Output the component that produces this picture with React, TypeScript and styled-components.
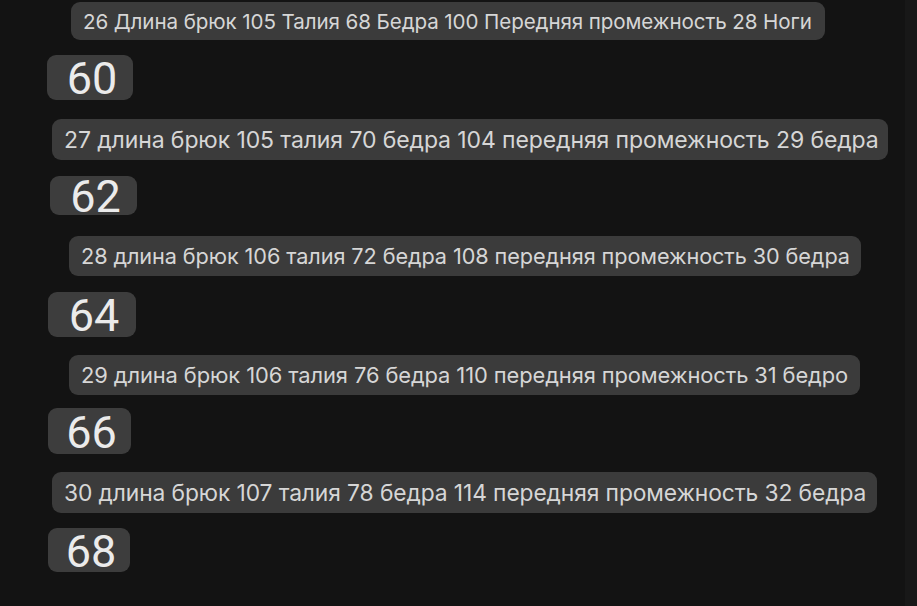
import React, { FC } from "react";
import styled, { createGlobalStyle } from "styled-components";

interface OffsetProps {
	$left: number;
	$top: number;
	$width: number;
	$height: number;
	$font?: number;
}

interface Entry {
	text: string;
	textLeft: number;
	textTop: number;
	textWidth: number;
	textHeight: number;
	textFont: number;
	size: string;
	sizeLeft: number;
	sizeTop: number;
	sizeWidth: number;
	sizeHeight: number;
}

const GlobalStyle = createGlobalStyle`
	html, body {
		margin: 0;
		padding: 0;
		background: #131313;
	}
	body {
		width: 917px;
		height: 606px;
		overflow: hidden;
		font-family: Inter, "Noto Sans", sans-serif;
	}
`;

const Page = styled.div`
	display: flex;
	flex-direction: column;
	align-items: flex-start;
	width: 917px;
	height: 606px;
	background: #131313;
	box-shadow: inset -12px 0 0 #181818;
`;

const Caption = styled.div<OffsetProps>`
	box-sizing: border-box;
	display: flex;
	align-items: center;
	margin: ${(p) => p.$top}px 0 0 ${(p) => p.$left}px;
	width: ${(p) => p.$width}px;
	height: ${(p) => p.$height}px;
	padding: 0 12px;
	background: #3b3b3b;
	border-radius: 9px;
	color: #d6d6d6;
	font-size: ${(p) => p.$font}px;
	letter-spacing: -0.1px;
	white-space: nowrap;
`;

const Size = styled.div<OffsetProps>`
	box-sizing: border-box;
	display: flex;
	align-items: center;
	justify-content: center;
	margin: ${(p) => p.$top}px 0 0 ${(p) => p.$left}px;
	width: ${(p) => p.$width}px;
	height: ${(p) => p.$height}px;
	padding: 2px 0 0 4px;
	background: #3d3d3d;
	border-radius: 9px;
	color: #ebebeb;
	font-family: Roboto, "Noto Sans", sans-serif;
	font-size: 45px;
	line-height: 1;
`;

const entries: Entry[] = [
	{
		text: "26 Длина брюк 105 Талия 68 Бедра 100 Передняя промежность 28 Ноги",
		textLeft: 71,
		textTop: 2,
		textWidth: 754,
		textHeight: 38,
		textFont: 20.6,
		size: "60",
		sizeLeft: 47,
		sizeTop: 15,
		sizeWidth: 86,
		sizeHeight: 45,
	},
	{
		text: "27 длина брюк 105 талия 70 бедра 104 передняя промежность 29 бедра",
		textLeft: 52,
		textTop: 19,
		textWidth: 836,
		textHeight: 41,
		textFont: 23,
		size: "62",
		sizeLeft: 50,
		sizeTop: 16,
		sizeWidth: 87,
		sizeHeight: 39,
	},
	{
		text: "28 длина брюк 106 талия 72 бедра 108 передняя промежность 30 бедра",
		textLeft: 69,
		textTop: 21,
		textWidth: 792,
		textHeight: 40,
		textFont: 21.7,
		size: "64",
		sizeLeft: 48,
		sizeTop: 16,
		sizeWidth: 88,
		sizeHeight: 45,
	},
	{
		text: "29 длина брюк 106 талия 76 бедра 110 передняя промежность 31 бедро",
		textLeft: 69,
		textTop: 18,
		textWidth: 791,
		textHeight: 40,
		textFont: 21.9,
		size: "66",
		sizeLeft: 48,
		sizeTop: 13,
		sizeWidth: 83,
		sizeHeight: 46,
	},
	{
		text: "30 длина брюк 107 талия 78 бедра 114 передняя промежность 32 бедра",
		textLeft: 52,
		textTop: 18,
		textWidth: 825,
		textHeight: 41,
		textFont: 22.8,
		size: "68",
		sizeLeft: 48,
		sizeTop: 15,
		sizeWidth: 82,
		sizeHeight: 44,
	},
];

const App: FC = () => {
	return (
		<>
			<GlobalStyle />
			<Page>
				{entries.map((e) => (
					<React.Fragment key={e.size}>
						<Caption
							$left={e.textLeft}
							$top={e.textTop}
							$width={e.textWidth}
							$height={e.textHeight}
							$font={e.textFont}
						>
							{e.text}
						</Caption>
						<Size
							$left={e.sizeLeft}
							$top={e.sizeTop}
							$width={e.sizeWidth}
							$height={e.sizeHeight}
						>
							{e.size}
						</Size>
					</React.Fragment>
				))}
			</Page>
		</>
	);
};

export default App;
